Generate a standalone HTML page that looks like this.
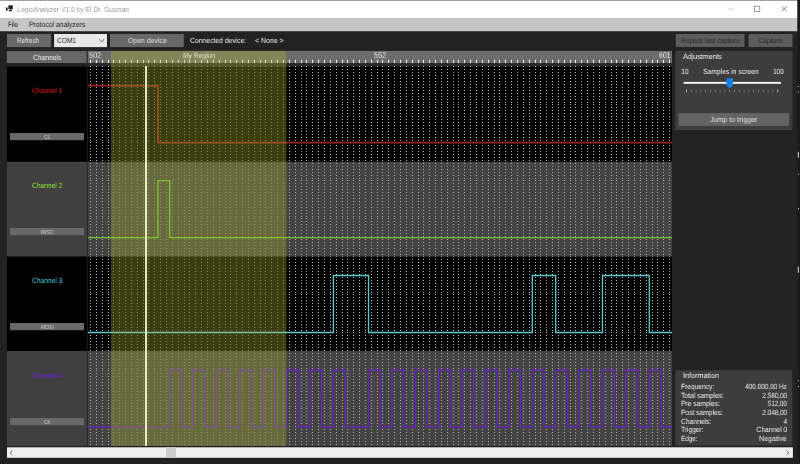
<!DOCTYPE html>
<html><head><meta charset="utf-8"><title>LogicAnalyzer V1.0 by El Dr. Gusman</title>
<style>
html,body{margin:0;padding:0;background:#222;}
body{width:800px;height:464px;overflow:hidden;position:relative;font-family:"Liberation Sans",sans-serif;}
.b{position:absolute;}
.t{position:absolute;white-space:nowrap;line-height:1;text-rendering:geometricPrecision;will-change:transform;}
svg{position:absolute;left:0;top:0;}
</style></head><body>
<svg width="800" height="464" viewBox="0 0 800 464">
<rect x="0" y="0" width="797.5" height="1" fill="#a0a0a0"/>
<rect x="0" y="1" width="797.5" height="17" fill="#ffffff"/>
<rect x="0" y="18" width="797.5" height="13.5" fill="#c6c6c6"/>
<rect x="0" y="31.5" width="797.5" height="432.5" fill="#222222"/>
<rect x="797.5" y="0" width="2.5" height="464" fill="#1a1a1a"/>
<rect x="7" y="34" width="44" height="13.1" fill="#686868"/>
<rect x="54.1" y="34" width="52.9" height="13.1" fill="#e8e8e8"/>
<rect x="110" y="34" width="73.75" height="13.1" fill="#686868"/>
<rect x="675.75" y="34" width="68.75" height="13" fill="#5c5c5c"/>
<rect x="748.6" y="34" width="43.9" height="13" fill="#5c5c5c"/>
<rect x="6.9" y="51.1" width="79.7" height="11.9" fill="#676767"/>
<rect x="675.2" y="50.8" width="117.3" height="79.2" fill="#3d3d3d"/>
<rect x="678.7" y="113.1" width="110.3" height="12.8" fill="#646464"/>
<rect x="675.2" y="370.3" width="117.1" height="75.3" fill="#3d3d3d"/>
<rect x="7" y="66.7" width="79.8" height="95.1" fill="#000000"/>
<rect x="10" y="133" width="74" height="7.2" fill="#686868"/>
<rect x="7" y="161.8" width="79.8" height="94.8" fill="#404040"/>
<rect x="10" y="228" width="74" height="7.2" fill="#686868"/>
<rect x="7" y="256.6" width="79.8" height="94.4" fill="#000000"/>
<rect x="10" y="323" width="74" height="7.2" fill="#686868"/>
<rect x="7" y="351" width="79.8" height="94.9" fill="#404040"/>
<rect x="10" y="418" width="74" height="7.2" fill="#686868"/>
<rect x="7" y="447.3" width="785.9" height="10.5" fill="#f0f0f0"/>
<rect x="166" y="447.3" width="10" height="10.5" fill="#cdcdcd"/>
<defs><clipPath id="wc"><rect x="87.7" y="50" width="584.3" height="400"/></clipPath></defs>
<rect x="87.7" y="50.9" width="584.3" height="12.2" fill="#6c6c6c"/>
<rect x="87.7" y="63.1" width="584.3" height="3.6" fill="#2a2a2a"/>
<rect x="87.7" y="66.7" width="584.3" height="95.1" fill="#000000"/>
<rect x="87.7" y="161.8" width="584.3" height="94.8" fill="#444444"/>
<rect x="87.7" y="256.6" width="584.3" height="94.4" fill="#000000"/>
<rect x="87.7" y="351" width="584.3" height="94.9" fill="#444444"/>
<g clip-path="url(#wc)">
<path d="M90.5 59.8V63.1M96.5 59.8V63.1M102.5 59.8V63.1M108.5 59.8V63.1M113.5 59.8V63.1M119.5 59.8V63.1M125.5 59.8V63.1M131.5 59.8V63.1M137.5 59.8V63.1M143.5 59.8V63.1M148.5 59.8V63.1M154.5 59.8V63.1M160.5 59.8V63.1M166.5 59.8V63.1M172.5 59.8V63.1M178.5 59.8V63.1M184.5 59.8V63.1M189.5 59.8V63.1M195.5 59.8V63.1M201.5 59.8V63.1M207.5 59.8V63.1M213.5 59.8V63.1M219.5 59.8V63.1M225.5 59.8V63.1M230.5 59.8V63.1M236.5 59.8V63.1M242.5 59.8V63.1M248.5 59.8V63.1M254.5 59.8V63.1M260.5 59.8V63.1M265.5 59.8V63.1M271.5 59.8V63.1M277.5 59.8V63.1M283.5 59.8V63.1M289.5 59.8V63.1M295.5 59.8V63.1M301.5 59.8V63.1M306.5 59.8V63.1M312.5 59.8V63.1M318.5 59.8V63.1M324.5 59.8V63.1M330.5 59.8V63.1M336.5 59.8V63.1M342.5 59.8V63.1M347.5 59.8V63.1M353.5 59.8V63.1M359.5 59.8V63.1M365.5 59.8V63.1M371.5 59.8V63.1M377.5 59.8V63.1M382.5 59.8V63.1M388.5 59.8V63.1M394.5 59.8V63.1M400.5 59.8V63.1M406.5 59.8V63.1M412.5 59.8V63.1M418.5 59.8V63.1M423.5 59.8V63.1M429.5 59.8V63.1M435.5 59.8V63.1M441.5 59.8V63.1M447.5 59.8V63.1M453.5 59.8V63.1M458.5 59.8V63.1M464.5 59.8V63.1M470.5 59.8V63.1M476.5 59.8V63.1M482.5 59.8V63.1M488.5 59.8V63.1M494.5 59.8V63.1M499.5 59.8V63.1M505.5 59.8V63.1M511.5 59.8V63.1M517.5 59.8V63.1M523.5 59.8V63.1M529.5 59.8V63.1M535.5 59.8V63.1M540.5 59.8V63.1M546.5 59.8V63.1M552.5 59.8V63.1M558.5 59.8V63.1M564.5 59.8V63.1M570.5 59.8V63.1M575.5 59.8V63.1M581.5 59.8V63.1M587.5 59.8V63.1M593.5 59.8V63.1M599.5 59.8V63.1M605.5 59.8V63.1M611.5 59.8V63.1M616.5 59.8V63.1M622.5 59.8V63.1M628.5 59.8V63.1M634.5 59.8V63.1M640.5 59.8V63.1M646.5 59.8V63.1M652.5 59.8V63.1M657.5 59.8V63.1M663.5 59.8V63.1M669.5 59.8V63.1" stroke="#f0f0f0" stroke-width="1" fill="none"/>
<defs><clipPath id="cb"><rect x="80" y="60" width="600" height="101.8"/><rect x="80" y="256.6" width="600" height="94.4"/></clipPath><clipPath id="cg"><rect x="80" y="161.8" width="600" height="94.8"/><rect x="80" y="351" width="600" height="94.9"/></clipPath></defs>
<g fill="none" stroke-width="1" stroke-dasharray="1 2 1 2 1 2 1 2 1 2 1 2 1 2 1 2 1 2 1 2 1 2 1 2 1 1">
<g clip-path="url(#cb)"><path d="M90.5 66V445.9M96.5 66V445.9M102.5 66V445.9M108.5 66V445.9M289.5 66V445.9M295.5 66V445.9M301.5 66V445.9M306.5 66V445.9M312.5 66V445.9M318.5 66V445.9M324.5 66V445.9M330.5 66V445.9M336.5 66V445.9M342.5 66V445.9M347.5 66V445.9M353.5 66V445.9M359.5 66V445.9M365.5 66V445.9M371.5 66V445.9M377.5 66V445.9M382.5 66V445.9M388.5 66V445.9M394.5 66V445.9M400.5 66V445.9M406.5 66V445.9M412.5 66V445.9M418.5 66V445.9M423.5 66V445.9M429.5 66V445.9M435.5 66V445.9M441.5 66V445.9M447.5 66V445.9M453.5 66V445.9M458.5 66V445.9M464.5 66V445.9M470.5 66V445.9M476.5 66V445.9M482.5 66V445.9M488.5 66V445.9M494.5 66V445.9M499.5 66V445.9M505.5 66V445.9M511.5 66V445.9M517.5 66V445.9M523.5 66V445.9M529.5 66V445.9M535.5 66V445.9M540.5 66V445.9M546.5 66V445.9M552.5 66V445.9M558.5 66V445.9M564.5 66V445.9M570.5 66V445.9M575.5 66V445.9M581.5 66V445.9M587.5 66V445.9M593.5 66V445.9M599.5 66V445.9M605.5 66V445.9M611.5 66V445.9M616.5 66V445.9M622.5 66V445.9M628.5 66V445.9M634.5 66V445.9M640.5 66V445.9M646.5 66V445.9M652.5 66V445.9M657.5 66V445.9M663.5 66V445.9M669.5 66V445.9" stroke="#bebebe"/><path d="M113.5 66V445.9M119.5 66V445.9M125.5 66V445.9M131.5 66V445.9M137.5 66V445.9M143.5 66V445.9M148.5 66V445.9M154.5 66V445.9M160.5 66V445.9M166.5 66V445.9M172.5 66V445.9M178.5 66V445.9M184.5 66V445.9M189.5 66V445.9M195.5 66V445.9M201.5 66V445.9M207.5 66V445.9M213.5 66V445.9M219.5 66V445.9M225.5 66V445.9M230.5 66V445.9M236.5 66V445.9M242.5 66V445.9M248.5 66V445.9M254.5 66V445.9M260.5 66V445.9M265.5 66V445.9M271.5 66V445.9M277.5 66V445.9M283.5 66V445.9" stroke="#bebebe" stroke-opacity="0.6"/></g>
<g clip-path="url(#cg)"><path d="M90.5 66V445.9M96.5 66V445.9M102.5 66V445.9M108.5 66V445.9M289.5 66V445.9M295.5 66V445.9M301.5 66V445.9M306.5 66V445.9M312.5 66V445.9M318.5 66V445.9M324.5 66V445.9M330.5 66V445.9M336.5 66V445.9M342.5 66V445.9M347.5 66V445.9M353.5 66V445.9M359.5 66V445.9M365.5 66V445.9M371.5 66V445.9M377.5 66V445.9M382.5 66V445.9M388.5 66V445.9M394.5 66V445.9M400.5 66V445.9M406.5 66V445.9M412.5 66V445.9M418.5 66V445.9M423.5 66V445.9M429.5 66V445.9M435.5 66V445.9M441.5 66V445.9M447.5 66V445.9M453.5 66V445.9M458.5 66V445.9M464.5 66V445.9M470.5 66V445.9M476.5 66V445.9M482.5 66V445.9M488.5 66V445.9M494.5 66V445.9M499.5 66V445.9M505.5 66V445.9M511.5 66V445.9M517.5 66V445.9M523.5 66V445.9M529.5 66V445.9M535.5 66V445.9M540.5 66V445.9M546.5 66V445.9M552.5 66V445.9M558.5 66V445.9M564.5 66V445.9M570.5 66V445.9M575.5 66V445.9M581.5 66V445.9M587.5 66V445.9M593.5 66V445.9M599.5 66V445.9M605.5 66V445.9M611.5 66V445.9M616.5 66V445.9M622.5 66V445.9M628.5 66V445.9M634.5 66V445.9M640.5 66V445.9M646.5 66V445.9M652.5 66V445.9M657.5 66V445.9M663.5 66V445.9M669.5 66V445.9" stroke="#aaaaaa"/><path d="M113.5 66V445.9M119.5 66V445.9M125.5 66V445.9M131.5 66V445.9M137.5 66V445.9M143.5 66V445.9M148.5 66V445.9M154.5 66V445.9M160.5 66V445.9M166.5 66V445.9M172.5 66V445.9M178.5 66V445.9M184.5 66V445.9M189.5 66V445.9M195.5 66V445.9M201.5 66V445.9M207.5 66V445.9M213.5 66V445.9M219.5 66V445.9M225.5 66V445.9M230.5 66V445.9M236.5 66V445.9M242.5 66V445.9M248.5 66V445.9M254.5 66V445.9M260.5 66V445.9M265.5 66V445.9M271.5 66V445.9M277.5 66V445.9M283.5 66V445.9" stroke="#b4b4b4" stroke-opacity="0.55"/></g>
</g>
<path d="M87.7 85.6H157.97V142.6H672" stroke="#9c1e1e" stroke-width="1.6" fill="none" stroke-linejoin="miter"/>
<path d="M87.7 237.7H157.97V180.7H169.67V237.7H672" stroke="#70c832" stroke-width="1.3" fill="none" stroke-linejoin="miter"/>
<path d="M87.7 332.5H333.44V275.5H368.53V332.5H532.30V275.5H555.70V332.5H602.49V275.5H649.28V332.5H672" stroke="#5ccaca" stroke-width="1.3" fill="none" stroke-linejoin="miter"/>
<path d="M87.7 426.9H169.67V369.9H181.36V426.9H193.06V369.9H204.76V426.9H216.46V369.9H228.16V426.9H239.85V369.9H251.55V426.9H263.25V369.9H274.95V426.9H286.65V369.9H298.34V426.9H310.04V369.9H321.74V426.9H333.44V369.9H345.14V426.9H368.53V369.9H380.23V426.9H391.93V369.9H403.63V426.9H415.32V369.9H427.02V426.9H438.72V369.9H450.42V426.9H462.12V369.9H473.81V426.9H485.51V369.9H497.21V426.9H508.91V369.9H520.61V426.9H532.30V369.9H544.00V426.9H555.70V369.9H567.40V426.9H579.10V369.9H590.79V426.9H602.49V369.9H614.19V426.9H625.89V369.9H637.59V426.9H649.28V369.9H660.98V426.9H672" stroke="#6424b8" stroke-width="1.5" fill="none" stroke-linejoin="miter"/>
<rect x="110.98" y="50.9" width="175.47" height="12.2" fill="rgba(175,185,45,0.33)"/>
<rect x="110.98" y="63.1" width="175.47" height="382.8" fill="rgba(175,185,45,0.33)"/>
<rect x="145.07" y="66" width="1.9" height="379.9" fill="#f2f2c8"/>
</g>
<rect x="5.9" y="7.5" width="1.7" height="3.1" fill="#111"/><rect x="8.4" y="5.3" width="4.4" height="4.1" fill="#222"/><rect x="9" y="10" width="2.9" height="1.25" fill="#111"/>
<path d="M728 9.1H734" stroke="#c8c8c8" stroke-width="0.8"/>
<rect x="754.4" y="6.2" width="5.4" height="5.2" fill="none" stroke="#777" stroke-width="0.7"/>
<path d="M781.3 6L787 11.6M787 6L781.3 11.6" stroke="#666" stroke-width="0.7"/>
<path d="M99.2 39.4L101.65 41.8L104.1 39.4" stroke="#444" stroke-width="0.8" fill="none"/>
<rect x="683.6" y="81.9" width="97.4" height="1.9" fill="#f4f4f4"/>
<path d="M726.4 78.2H733V85.5L729.7 88.6L726.4 85.5Z" fill="#1480e4"/>
<path d="M691.30 89.6V92.3M696.10 89.6V92.3M700.90 89.6V92.3M705.70 89.6V92.3M710.50 89.6V92.3M715.30 89.6V92.3M720.10 89.6V92.3M724.90 89.6V92.3M729.70 89.6V92.3M734.50 89.6V92.3M739.30 89.6V92.3M744.10 89.6V92.3M748.90 89.6V92.3M753.70 89.6V92.3M758.50 89.6V92.3M763.30 89.6V92.3M768.10 89.6V92.3M772.90 89.6V92.3" stroke="#9c9c9c" stroke-width="0.7" fill="none"/>
<path d="M686.50 89.6V92.3M777.70 89.6V92.3" stroke="#d0d0d0" stroke-width="0.8" fill="none"/>
<path d="M12.3 450.6L10 452.7L12.3 454.8" stroke="#444" stroke-width="0.8" fill="none"/>
<path d="M786.6 450.6L788.9 452.7L786.6 454.8" stroke="#444" stroke-width="0.8" fill="none"/>
<rect x="797.9" y="86" width="1" height="1" fill="#d8d8d8"/>
<rect x="797.9" y="91.5" width="1" height="1" fill="#d8d8d8"/>
<rect x="797.8" y="151.8" width="1.2" height="6" fill="#c8b4a4"/>
<rect x="798" y="173.6" width="1" height="1" fill="#cccccc"/>
<rect x="798" y="208" width="1" height="1.6" fill="#aaaaaa"/>
<rect x="797.8" y="266.8" width="1.2" height="6" fill="#c8b4a4"/>
<rect x="797.9" y="380.2" width="1" height="1" fill="#d8d8d8"/>
<rect x="797.9" y="386" width="1" height="1" fill="#d8d8d8"/>
</svg>
<div class="t" id="t0" style="top:6px;font-size:7.5px;color:#9a9a9a;left:17px;transform-origin:0 50%;transform:scaleX(0.8925);">LogicAnalyzer V1.0 by El Dr. Gusman</div>
<div class="t" id="t1" style="top:21px;font-size:7.6px;color:#1a1a1a;left:7.5px;transform-origin:0 50%;transform:scaleX(0.8163);">File</div>
<div class="t" id="t2" style="top:21px;font-size:7.6px;color:#1a1a1a;left:28.75px;transform-origin:0 50%;transform:scaleX(0.9005);">Protocol analyzers</div>
<div class="t" id="t3" style="top:37px;font-size:7.6px;color:#e8e8e8;left:16.9px;transform-origin:0 50%;transform:scaleX(0.8310);">Refresh</div>
<div class="t" id="t4" style="top:37px;font-size:7.6px;color:#222;left:56.9px;transform-origin:0 50%;transform:scaleX(0.8700);">COM1</div>
<div class="t" id="t5" style="top:37px;font-size:7.6px;color:#e0e0e0;left:127.5px;transform-origin:0 50%;transform:scaleX(0.9088);">Open device</div>
<div class="t" id="t6" style="top:37px;font-size:7.6px;color:#f0f0f0;left:189.5px;transform-origin:0 50%;transform:scaleX(0.8942);">Connected device:</div>
<div class="t" id="t7" style="top:37px;font-size:7.6px;color:#f0f0f0;left:254.5px;transform-origin:0 50%;transform:scaleX(0.9200);">&lt; None &gt;</div>
<div class="t" id="t8" style="top:54px;font-size:7.6px;color:#f0f0f0;left:32.5px;transform-origin:0 50%;transform:scaleX(0.8802);">Channels</div>
<div class="t" id="t9" style="top:52px;font-size:7.6px;color:#e4e4cc;left:182.8px;transform-origin:0 50%;transform:scaleX(0.8871);">My Region</div>
<div class="t" id="t10" style="top:51px;font-size:8.4px;color:#e8e8e8;left:88.7px;transform-origin:0 50%;transform:scaleX(0.8724);">502</div>
<div class="t" id="t11" style="top:51px;font-size:8.4px;color:#e8e8e8;left:374px;transform-origin:0 50%;transform:scaleX(0.8760);">552</div>
<div class="t" id="t12" style="top:51px;font-size:8.4px;color:#e8e8e8;left:659.25px;transform-origin:0 50%;transform:scaleX(0.8223);">601</div>
<div class="t" id="t13" style="top:37px;font-size:7.6px;color:#2c2c2c;left:680.5px;transform-origin:0 50%;transform:scaleX(0.8921);">Repeat last capture</div>
<div class="t" id="t14" style="top:37px;font-size:7.6px;color:#2c2c2c;left:758px;transform-origin:0 50%;transform:scaleX(0.9064);">Capture</div>
<div class="t" id="t15" style="top:53px;font-size:7.6px;color:#f0f0f0;left:683px;transform-origin:0 50%;transform:scaleX(0.9331);">Adjustments</div>
<div class="t" id="t16" style="top:68px;font-size:7.6px;color:#f0f0f0;left:680.7px;transform-origin:0 50%;transform:scaleX(0.9109);">10</div>
<div class="t" id="t17" style="top:68px;font-size:7.6px;color:#f0f0f0;left:702.6px;transform-origin:0 50%;transform:scaleX(0.8916);">Samples in screen</div>
<div class="t" id="t18" style="top:68px;font-size:7.6px;color:#f0f0f0;left:772.8px;transform-origin:0 50%;transform:scaleX(0.8444);">100</div>
<div class="t" id="t19" style="top:116px;font-size:7.6px;color:#e0e0e0;left:710px;transform-origin:0 50%;transform:scaleX(0.9357);">Jump to trigger</div>
<div class="t" id="t20" style="top:87px;font-size:7.6px;color:#f01818;left:31.5px;transform-origin:0 50%;transform:scaleX(0.8736);">Channel 1</div>
<div class="t" id="t21" style="top:182px;font-size:7.6px;color:#8cf032;left:31.5px;transform-origin:0 50%;transform:scaleX(0.8736);">Channel 2</div>
<div class="t" id="t22" style="top:277px;font-size:7.6px;color:#38d8e8;left:31.5px;transform-origin:0 50%;transform:scaleX(0.8736);">Channel 3</div>
<div class="t" id="t23" style="top:372px;font-size:7.6px;color:#7422f0;left:31.5px;transform-origin:0 50%;transform:scaleX(0.8736);">Channel 4</div>
<div class="t" id="t24" style="top:136px;font-size:5.8px;color:#d4d4d4;left:44.3px;transform-origin:0 50%;transform:scaleX(0.7318);">CS</div>
<div class="t" id="t25" style="top:231px;font-size:5.8px;color:#d4d4d4;left:40.8px;transform-origin:0 50%;transform:scaleX(0.8295);">MISO</div>
<div class="t" id="t26" style="top:326px;font-size:5.8px;color:#d4d4d4;left:40.6px;transform-origin:0 50%;transform:scaleX(0.8565);">MOSI</div>
<div class="t" id="t27" style="top:421px;font-size:5.8px;color:#d4d4d4;left:44px;transform-origin:0 50%;transform:scaleX(0.8062);">CK</div>
<div class="t" id="t28" style="top:372px;font-size:7.6px;color:#f0f0f0;left:683.1px;transform-origin:0 50%;transform:scaleX(0.9500);">Information</div>
<div class="t" id="t29" style="top:383px;font-size:7.5px;color:#f0f0f0;left:680.7px;transform-origin:0 50%;transform:scaleX(0.8873);">Frequency:</div>
<div class="t" id="t30" style="top:383px;font-size:7.5px;color:#f0f0f0;right:13.2px;transform-origin:100% 50%;transform:scaleX(0.8525);">400.000,00 Hz</div>
<div class="t" id="t31" style="top:392px;font-size:7.5px;color:#f0f0f0;left:680.7px;transform-origin:0 50%;transform:scaleX(0.8980);">Total samples:</div>
<div class="t" id="t32" style="top:392px;font-size:7.5px;color:#f0f0f0;right:13.2px;transform-origin:100% 50%;transform:scaleX(0.8492);">2.560,00</div>
<div class="t" id="t33" style="top:400px;font-size:7.5px;color:#f0f0f0;left:680.7px;transform-origin:0 50%;transform:scaleX(0.8908);">Pre samples:</div>
<div class="t" id="t34" style="top:400px;font-size:7.5px;color:#f0f0f0;right:13.2px;transform-origin:100% 50%;transform:scaleX(0.8321);">512,00</div>
<div class="t" id="t35" style="top:409px;font-size:7.5px;color:#f0f0f0;left:680.7px;transform-origin:0 50%;transform:scaleX(0.8915);">Post samples:</div>
<div class="t" id="t36" style="top:409px;font-size:7.5px;color:#f0f0f0;right:13.2px;transform-origin:100% 50%;transform:scaleX(0.8492);">2.048,00</div>
<div class="t" id="t37" style="top:418px;font-size:7.5px;color:#f0f0f0;left:680.7px;transform-origin:0 50%;transform:scaleX(0.8969);">Channels:</div>
<div class="t" id="t38" style="top:418px;font-size:7.5px;color:#f0f0f0;right:13.2px;transform-origin:100% 50%;transform:scaleX(0.8390);">4</div>
<div class="t" id="t39" style="top:426px;font-size:7.5px;color:#f0f0f0;left:680.7px;transform-origin:0 50%;transform:scaleX(0.8802);">Trigger:</div>
<div class="t" id="t40" style="top:426px;font-size:7.5px;color:#f0f0f0;right:13.2px;transform-origin:100% 50%;transform:scaleX(0.9005);">Channel 0</div>
<div class="t" id="t41" style="top:435px;font-size:7.5px;color:#f0f0f0;left:680.7px;transform-origin:0 50%;transform:scaleX(0.8414);">Edge:</div>
<div class="t" id="t42" style="top:435px;font-size:7.5px;color:#f0f0f0;right:13.2px;transform-origin:100% 50%;transform:scaleX(0.9288);">Negative</div>
</body></html>
